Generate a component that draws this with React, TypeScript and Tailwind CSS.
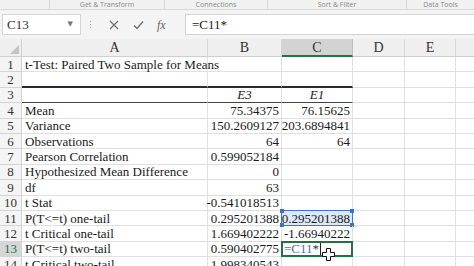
import React from "react";

type Row = { n: number; a?: string; b?: string; c?: React.ReactNode };

const rows: Row[] = [
  { n: 1, a: "t-Test: Paired Two Sample for Means" },
  { n: 2 },
  { n: 3 },
  { n: 4, a: "Mean", b: "75.34375", c: "76.15625" },
  { n: 5, a: "Variance", b: "150.2609127", c: "203.6894841" },
  { n: 6, a: "Observations", b: "64", c: "64" },
  { n: 7, a: "Pearson Correlation", b: "0.599052184" },
  { n: 8, a: "Hypothesized Mean Difference", b: "0" },
  { n: 9, a: "df", b: "63" },
  { n: 10, a: "t Stat", b: "-0.541018513" },
  { n: 11, a: "P(T<=t) one-tail", b: "0.295201388", c: "0.295201388" },
  { n: 12, a: "t Critical one-tail", b: "1.669402222", c: "-1.66940222" },
  { n: 13, a: "P(T<=t) two-tail", b: "0.590402775" },
  { n: 14, a: "t Critical two-tail", b: "1.998340543" },
];

function Handle({ pos }: { pos: string }) {
  return <div className={`absolute w-[4px] h-[4px] bg-[#3f6fbf] ${pos}`} />;
}

export default function App() {
  return (
    <div className="w-[474px] h-[266px] overflow-hidden bg-white relative text-[#1a1a1a] font-['Liberation_Serif','Times_New_Roman',serif]">
      {/* ribbon group labels */}
      <div className="h-[10px] bg-[#f1f1f1] border-b border-[#d8d8d8] flex items-center text-[7px] text-[#888] overflow-hidden font-['Open_Sans','Liberation_Sans',sans-serif]">
        <div className="w-[50px] h-full border-r border-[#d6d6d6]" />
        <div className="w-[115px] h-full border-r border-[#d6d6d6] flex items-center justify-center leading-[9px]">Get &amp; Transform</div>
        <div className="w-[103px] h-full border-r border-[#d6d6d6] flex items-center justify-center leading-[9px]">Connections</div>
        <div className="w-[139px] h-full border-r border-[#d6d6d6] flex items-center justify-center leading-[9px]">Sort &amp; Filter</div>
        <div className="flex-1 h-full flex items-center justify-center leading-[9px]">Data Tools</div>
      </div>
      <div className="h-[4px] bg-[#f4f4f4]" />
      {/* formula bar */}
      <div className="h-[21px] bg-[#f4f4f4] flex items-stretch">
        <div className="ml-[2px] w-[79px] bg-white border border-[#d4d4d4] flex items-center px-[4px] text-[13px] text-[#333]">
          <span className="flex-1">C13</span>
          <span className="text-[7px] text-[#777] mr-[3px] font-['DejaVu_Sans',sans-serif]">▼</span>
        </div>
        <div className="w-[18px] flex flex-col items-center justify-center gap-[2px]">
          <div className="w-[1px] h-[1px] bg-[#aaa]" />
          <div className="w-[1px] h-[1px] bg-[#aaa]" />
          <div className="w-[1px] h-[1px] bg-[#aaa]" />
        </div>
        <div className="w-[86px] flex items-center">
          <svg width="10" height="10" viewBox="0 0 10 10" className="ml-[10px]">
            <path d="M1 1 L9 9 M9 1 L1 9" stroke="#707070" strokeWidth="1.2" />
          </svg>
          <svg width="11" height="10" viewBox="0 0 11 10" className="ml-[14px]">
            <path d="M1 5.5 L4 8.5 L10 1.5" stroke="#707070" strokeWidth="1.4" fill="none" />
          </svg>
          <span className="ml-[13px] italic text-[12px] text-[#666]">fx</span>
        </div>
        <div className="flex-1 bg-white border-l border-t border-b border-[#d4d4d4] flex items-center pl-[6px] text-[13px] text-[#222]">
          =C11*
        </div>
      </div>
      <div className="h-[4px] bg-[#f4f4f4]" />
      {/* column headers */}
      <div className="h-[18px] flex bg-[#efefef] border-b border-[#cfcfcf] text-[14px] text-[#333]">
        <div className="w-[22px] border-r border-[#d0d0d0] relative">
          <svg width="9" height="9" viewBox="0 0 9 9" className="absolute right-[2px] bottom-[2px]">
            <path d="M9 0 L9 9 L0 9 Z" fill="#c4c4c4" />
          </svg>
        </div>
        <div className="w-[186px] border-r border-[#d6d6d6] flex items-center justify-center">A</div>
        <div className="w-[74px] border-r border-[#d6d6d6] flex items-center justify-center">B</div>
        <div className="w-[71px] border-r border-[#bdbdbd] bg-[#d3d3d3] border-b-2 border-b-[#217346] flex items-center justify-center -mb-[1px]">C</div>
        <div className="w-[52px] border-r border-[#d6d6d6] flex items-center justify-center">D</div>
        <div className="w-[51px] border-r border-[#d6d6d6] flex items-center justify-center">E</div>
        <div className="flex-1" />
      </div>
      {/* rows */}
      {rows.map((r) => {
        const sel = r.n === 13;
        const bBorder =
          r.n === 2
            ? "border-b-2 border-b-[#2a2a2a]"
            : r.n === 3
            ? "border-b border-b-[#444]"
            : "border-b border-b-[#e0e0e0]";
        return (
          <div key={r.n} className="h-[15.4px] flex text-[13px] leading-none">
            <div
              className={`w-[22px] shrink-0 border-r border-b border-[#d4d4d4] flex items-center justify-center ${
                sel ? "bg-[#d6d6d6] text-[#217346]" : "bg-[#f4f4f4] text-[#333]"
              }`}
            >
              {r.n}
            </div>
            <div className={`w-[186px] shrink-0 border-r border-r-[#e0e0e0] ${bBorder} flex items-center pl-[3px] whitespace-nowrap`}>
              {r.a}
            </div>
            <div
              className={`w-[74px] shrink-0 border-r border-r-[#e0e0e0] ${bBorder} flex items-center whitespace-nowrap ${
                r.n === 3 ? "justify-center italic" : "justify-end pr-[2px]"
              }`}
            >
              {r.n === 3 ? "E3" : r.b}
            </div>
            <div
              className={`w-[71px] shrink-0 border-r border-r-[#e0e0e0] ${bBorder} flex items-center whitespace-nowrap relative ${
                r.n === 3 ? "justify-center italic" : "justify-end pr-[2px]"
              } ${r.n === 11 ? "bg-[#dde8f6]" : ""}`}
            >
              {r.n === 3 ? "E1" : r.c}
              {r.n === 11 && (
                <>
                  <div className="absolute -left-[1px] -top-[1px] -right-[1px] -bottom-[1px] border border-[#4472c4]" />
                  <Handle pos="-left-[2px] -top-[2px]" />
                  <Handle pos="-right-[2px] -top-[2px]" />
                  <Handle pos="-left-[2px] -bottom-[2px]" />
                  <Handle pos="-right-[2px] -bottom-[2px]" />
                </>
              )}
              {sel && (
                <div className="absolute -left-[1px] -top-[1px] -right-[1px] -bottom-[1px] border-2 border-[#217346] bg-white flex items-center pl-[1px]">
                  <span className="text-[#4a6fb5]">=C11</span>
                  <span className="text-[#333]">*</span>
                  <div className="w-[1px] h-[12px] bg-[#222] ml-[1px]" />
                  <svg width="13" height="13" viewBox="0 0 13 13" className="absolute left-[39px] top-[5px]">
                    <path
                      d="M4.5 0.5 H8.5 V4.5 H12.5 V8.5 H8.5 V12.5 H4.5 V8.5 H0.5 V4.5 H4.5 Z"
                      fill="white"
                      stroke="#111"
                      strokeWidth="1"
                    />
                  </svg>
                </div>
              )}
            </div>
            <div className="w-[52px] shrink-0 border-r border-b border-[#e0e0e0]" />
            <div className="w-[51px] shrink-0 border-r border-b border-[#e0e0e0]" />
            <div className="flex-1 border-b border-[#e0e0e0]" />
          </div>
        );
      })}
    </div>
  );
}
